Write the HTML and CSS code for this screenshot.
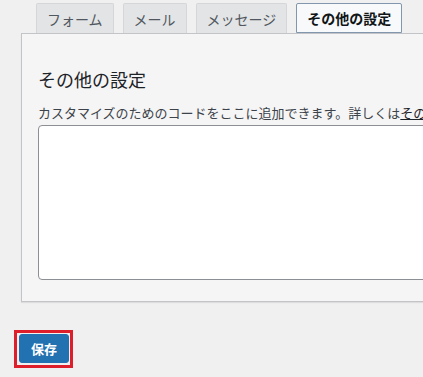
FILE: index.html
```html
<!DOCTYPE html>
<html lang="ja">
<head>
    <meta charset="UTF-8">
    <meta name="viewport" content="width=device-width, initial-scale=1.0">
    <title>その他の設定</title>
    <link rel="stylesheet" href="styles.css">
</head>
<body>
    <div class="wrap">
        <div class="tabs">
            <span class="tab">フォーム</span>
            <span class="tab">メール</span>
            <span class="tab">メッセージ</span>
            <span class="tab active">その他の設定</span>
        </div>
        <div class="panel">
            <h2 class="title">その他の設定</h2>
            <p class="desc">カスタマイズのためのコードをここに追加できます。詳しくは<a href="#">その他の設定</a>をご覧ください。</p>
            <textarea class="code"></textarea>
        </div>
        <div class="save-box">
            <button class="save">保存</button>
        </div>
    </div>
</body>
</html>
```

FILE: styles.css
```css
html, body{
    margin: 0;
    overflow: hidden;
}
body{
    background-color: #f0f0f1;
    font-family: "Noto Sans CJK JP", "Noto Sans", sans-serif;
    color: #1d2327;
}
.wrap{
    padding: 3px 0 0 21px;
}
.tabs{
    display: flex;
    gap: 9px;
    padding-left: 15px;
    height: 30px;
}
.tab{
    display: block;
    height: 30px;
    line-height: 30px;
    padding: 0 10px;
    border: 1px solid #d5d6d8;
    border-bottom: none;
    border-radius: 2px 2px 0 0;
    background-color: #e3e4e5;
    color: #50575e;
    font-size: 14px;
    box-sizing: border-box;
}
.tab.active{
    background-color: #f8f9fa;
    border: 1px solid #8296ad;
    color: #101517;
    font-weight: bold;
    line-height: 28px;
    height: 30px;
}
.panel{
    width: 620px;
    background-color: #f5f5f5;
    border: 1px solid #c3c4c7;
    box-shadow: 0 1px 1px rgba(0, 0, 0, 0.08);
    padding: 33px 0 21px 16px;
}
.title{
    margin: 0 0 12px;
    font-size: 18px;
    line-height: 24px;
    font-weight: normal;
    color: #1d2327;
}
.desc{
    margin: 0 0 2px;
    font-size: 13px;
    line-height: 20px;
    color: #3c434a;
    white-space: nowrap;
}
.desc a{
    color: #1d2327;
    text-decoration: underline;
}
.code{
    display: block;
    width: 560px;
    height: 155px;
    margin: 0;
    border: 1px solid #8c8f94;
    border-radius: 4px;
    background-color: #fff;
    box-sizing: border-box;
    resize: none;
}
.save-box{
    display: inline-block;
    margin: 28px 0 0 -7px;
    border: 3px solid #dc1f2b;
    padding: 1px 1px 2px 2px;
}
.save{
    display: block;
    width: 50px;
    height: 29px;
    padding: 0;
    border: 1px solid #2271b1;
    border-radius: 3px;
    background-color: #2271b1;
    color: #fff;
    font-family: "Noto Sans CJK JP", sans-serif;
    font-size: 13px;
    font-weight: bold;
}
```
